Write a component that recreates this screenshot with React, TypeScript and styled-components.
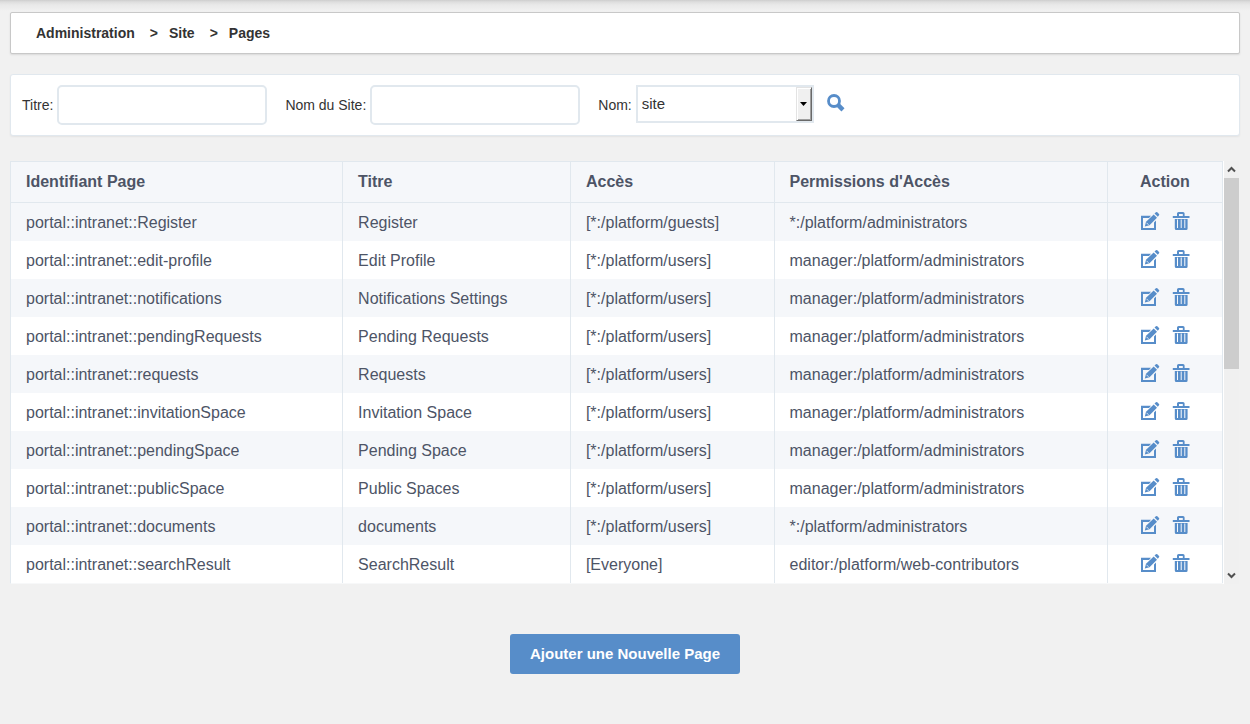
import React from 'react';
import styled, { createGlobalStyle } from 'styled-components';

const GlobalStyle = createGlobalStyle`
  *, *::before, *::after { box-sizing: border-box; }
  body {
    margin: 0;
    background: #f1f1f1;
    color: #333;
    font-family: "Liberation Sans", Arial, sans-serif;
    font-size: 14px;
    line-height: 20px;
  }
`;

const Page = styled.div`
  min-height: 100vh;
  padding: 12px 10px 50px;
  background: linear-gradient(#cdcdcd, #dedede 2px, #e9e9e9 5px, #f1f1f1 11px);
`;

const Breadcrumb = styled.nav`
  padding: 10px 25px;
  margin-bottom: 20px;
  background: #fff;
  border: 1px solid #c8c8c8;
  border-radius: 2px;
  box-shadow: 0 1px 2px rgba(0, 0, 0, 0.1);
`;

const Crumbs = styled.ol`
  display: flex;
  margin: 0;
  padding: 0;
  list-style: none;
  font-weight: bold;
`;

const Crumb = styled.li`
  & + &::before {
    content: ">";
    margin: 0 11px 0 15px;
  }
`;

const CrumbLink = styled.a`
  color: inherit;
  text-decoration: none;
`;

const Filters = styled.form`
  display: flex;
  align-items: flex-start;
  gap: 18px;
  padding: 10px 11px;
  margin-bottom: 25px;
  background: #fff;
  border: 1px solid #e1e8ee;
  border-radius: 3px;
  box-shadow: 0 1px 2px rgba(0, 0, 0, 0.06);
`;

const Field = styled.div`
  display: flex;
  align-items: center;
  gap: 4px;
`;

const Label = styled.label`
  line-height: 40px;
`;

const TextInput = styled.input`
  width: 210px;
  height: 40px;
  padding: 0 8px;
  border: 2px solid #e1e8ee;
  border-radius: 5px;
  background: #fff;
  font: inherit;
`;

const SelectBox = styled.div`
  position: relative;
  align-self: flex-start;
`;

const Select = styled.select`
  display: block;
  width: 178px;
  height: 38px;
  padding: 0 20px 0 4px;
  appearance: none;
  border: 2px solid #e1e8ee;
  border-radius: 0;
  background: #fff;
  color: #333;
  font: inherit;
  font-size: 15px;
`;

const SelectArrow = styled.span`
  position: absolute;
  top: 2px;
  right: 2px;
  display: grid;
  place-items: center;
  width: 16px;
  height: 34px;
  background: #f0f0f0;
  border: 1px solid;
  border-color: #e3e3e3 #696969 #696969 #e3e3e3;
  box-shadow: inset 1px 1px #fff, inset -1px -1px #a0a0a0;
  pointer-events: none;
`;

const IconButton = styled.button`
  display: block;
  padding: 0;
  border: 0;
  background: none;
  color: #578dc9;
  cursor: pointer;

  svg { display: block; }
`;

const SearchButton = styled(IconButton)`
  margin: 9px 0 0 -5px;
`;

const ListPanel = styled.div`
  display: flex;
  padding-right: 1px;
  margin-bottom: 50px;
`;

const Table = styled.table`
  flex: 1;
  table-layout: fixed;
  border-collapse: separate;
  border-spacing: 0;
  border: 1px solid #e1e8ee;
  border-right: 0;
  border-bottom-color: #f7f8f9;
  background: #fff;
  color: #4d5466;
  font-size: 16px;
`;

const Col = styled.col<{ $width: string }>`
  width: ${({ $width }) => $width};
`;

const HeaderCell = styled.th<{ $center?: boolean }>`
  height: 41px;
  padding: 0 15px;
  border-right: 1px solid #e1e8ee;
  border-bottom: 1px solid #e1e8ee;
  background: #f5f7fa;
  text-align: ${({ $center }) => ($center ? 'center' : 'left')};
`;

const Row = styled.tr`
  &:nth-child(odd) { background: #f5f7fa; }
`;

const Cell = styled.td`
  height: 38px;
  padding: 2px 15px 0;
  border-right: 1px solid #e1e8ee;
`;

const Actions = styled.div`
  display: flex;
  justify-content: center;
  gap: 12px;
  padding-bottom: 4px;
`;

const ScrollBar = styled.div`
  display: flex;
  flex-direction: column;
  width: 16px;
  border-left: 1px solid #fff;
  background: #f0f0f0;
`;

const ScrollButton = styled.button`
  display: grid;
  place-items: center;
  height: 17px;
  padding: 0;
  border: 0;
  background: none;
  color: #505050;
`;

const ScrollTrack = styled.div`
  flex: 1;
`;

const ScrollThumb = styled.div`
  height: 49%;
  background: #cdcdcd;
`;

const Footer = styled.div`
  display: flex;
  justify-content: center;
`;

const PrimaryButton = styled.button`
  height: 40px;
  padding: 0 20px;
  border: 0;
  border-radius: 3px;
  background: #578dc9;
  color: #fff;
  font: inherit;
  font-size: 15px;
  font-weight: bold;
  cursor: pointer;
`;

const SearchIcon = () => (
  <svg width="18" height="18" viewBox="0 0 18 18" fill="none" stroke="currentColor" aria-hidden="true">
    <circle cx="7" cy="7" r="5.5" strokeWidth="2.8" />
    <path d="M11.2 11.2 16 15.8" strokeWidth="4.4" />
  </svg>
);

const EditIcon = () => (
  <svg width="20" height="20" viewBox="0 0 20 20" fill="currentColor" aria-hidden="true">
    <path d="M1 4.8H11L9 6.9H3V17H14V11.5L16 9.5V19H1Z" />
    <path d="M4.8 15.4 6 10.7 13.7 3.4 17 6.7 9.5 14.2Z" />
    <path d="M14.5 2.6 15.9 1.3Q16.6 .7 17.3 1.3L19 3Q19.6 3.6 19 4.3L17.8 5.7Z" />
    <path d="M6.5 11.8 8.5 13.8" stroke="#fff" strokeWidth=".8" />
  </svg>
);

const TrashIcon = () => (
  <svg width="18" height="20" viewBox="0 0 18 20" fill="currentColor" aria-hidden="true">
    <path fillRule="evenodd" d="M.8 5H5V2.6Q5 1 6.6 1H11Q12.6 1 12.6 2.6V5H17.5V7H.8ZM7 5H10.8V3H7Z" />
    <path fillRule="evenodd" d="M2.8 8H15.6V17.5Q15.6 19 14.1 19H4.3Q2.8 19 2.8 17.5ZM5 8.5V17H6V8.5ZM8.7 8.5V17H9.7V8.5ZM12.3 8.5V17H13.3V8.5Z" />
  </svg>
);

const Chevron = ({ down = false }: { down?: boolean }) => (
  <svg width="9" height="7" viewBox="0 0 9 7" fill="none" stroke="currentColor" strokeWidth="2" aria-hidden="true">
    <path d={down ? 'M1 1.5 4.5 5 8 1.5' : 'M1 5.5 4.5 2 8 5.5'} />
  </svg>
);

const columnWidths = ['27.4%', '18.8%', '16.8%', '27.5%', '9.5%'];

type PageEntry = [id: string, title: string, access: string, permission: string];

const pages: PageEntry[] = [
  ['portal::intranet::Register', 'Register', '[*:/platform/guests]', '*:/platform/administrators'],
  ['portal::intranet::edit-profile', 'Edit Profile', '[*:/platform/users]', 'manager:/platform/administrators'],
  ['portal::intranet::notifications', 'Notifications Settings', '[*:/platform/users]', 'manager:/platform/administrators'],
  ['portal::intranet::pendingRequests', 'Pending Requests', '[*:/platform/users]', 'manager:/platform/administrators'],
  ['portal::intranet::requests', 'Requests', '[*:/platform/users]', 'manager:/platform/administrators'],
  ['portal::intranet::invitationSpace', 'Invitation Space', '[*:/platform/users]', 'manager:/platform/administrators'],
  ['portal::intranet::pendingSpace', 'Pending Space', '[*:/platform/users]', 'manager:/platform/administrators'],
  ['portal::intranet::publicSpace', 'Public Spaces', '[*:/platform/users]', 'manager:/platform/administrators'],
  ['portal::intranet::documents', 'documents', '[*:/platform/users]', '*:/platform/administrators'],
  ['portal::intranet::searchResult', 'SearchResult', '[Everyone]', 'editor:/platform/web-contributors'],
];

export default function App() {
  return (
    <>
      <GlobalStyle />
      <Page>
        <Breadcrumb>
          <Crumbs>
            {['Administration', 'Site', 'Pages'].map((name) => (
              <Crumb key={name}>
                <CrumbLink href="#">{name}</CrumbLink>
              </Crumb>
            ))}
          </Crumbs>
        </Breadcrumb>

        <Filters onSubmit={(event) => event.preventDefault()}>
          <Field>
            <Label htmlFor="title">Titre:</Label>
            <TextInput id="title" type="text" />
          </Field>
          <Field>
            <Label htmlFor="site-name">Nom du Site:</Label>
            <TextInput id="site-name" type="text" />
          </Field>
          <Field>
            <Label htmlFor="site-type">Nom:</Label>
            <SelectBox>
              <Select id="site-type" defaultValue="site">
                <option value="site">site</option>
              </Select>
              <SelectArrow>
                <svg width="7" height="4" viewBox="0 0 7 4" aria-hidden="true">
                  <path d="M0 0H7L3.5 4Z" />
                </svg>
              </SelectArrow>
            </SelectBox>
          </Field>
          <SearchButton type="submit" aria-label="Rechercher">
            <SearchIcon />
          </SearchButton>
        </Filters>

        <ListPanel>
          <Table>
            <colgroup>
              {columnWidths.map((width, index) => (
                <Col key={index} $width={width} />
              ))}
            </colgroup>
            <thead>
              <tr>
                <HeaderCell>Identifiant Page</HeaderCell>
                <HeaderCell>Titre</HeaderCell>
                <HeaderCell>Accès</HeaderCell>
                <HeaderCell>Permissions d'Accès</HeaderCell>
                <HeaderCell $center>Action</HeaderCell>
              </tr>
            </thead>
            <tbody>
              {pages.map(([id, title, access, permission]) => (
                <Row key={id}>
                  <Cell>{id}</Cell>
                  <Cell>{title}</Cell>
                  <Cell>{access}</Cell>
                  <Cell>{permission}</Cell>
                  <Cell>
                    <Actions>
                      <IconButton type="button" aria-label={`Modifier ${title}`}>
                        <EditIcon />
                      </IconButton>
                      <IconButton type="button" aria-label={`Supprimer ${title}`}>
                        <TrashIcon />
                      </IconButton>
                    </Actions>
                  </Cell>
                </Row>
              ))}
            </tbody>
          </Table>
          <ScrollBar>
            <ScrollButton type="button" aria-label="Défiler vers le haut">
              <Chevron />
            </ScrollButton>
            <ScrollTrack>
              <ScrollThumb />
            </ScrollTrack>
            <ScrollButton type="button" aria-label="Défiler vers le bas">
              <Chevron down />
            </ScrollButton>
          </ScrollBar>
        </ListPanel>

        <Footer>
          <PrimaryButton type="button">Ajouter une Nouvelle Page</PrimaryButton>
        </Footer>
      </Page>
    </>
  );
}
